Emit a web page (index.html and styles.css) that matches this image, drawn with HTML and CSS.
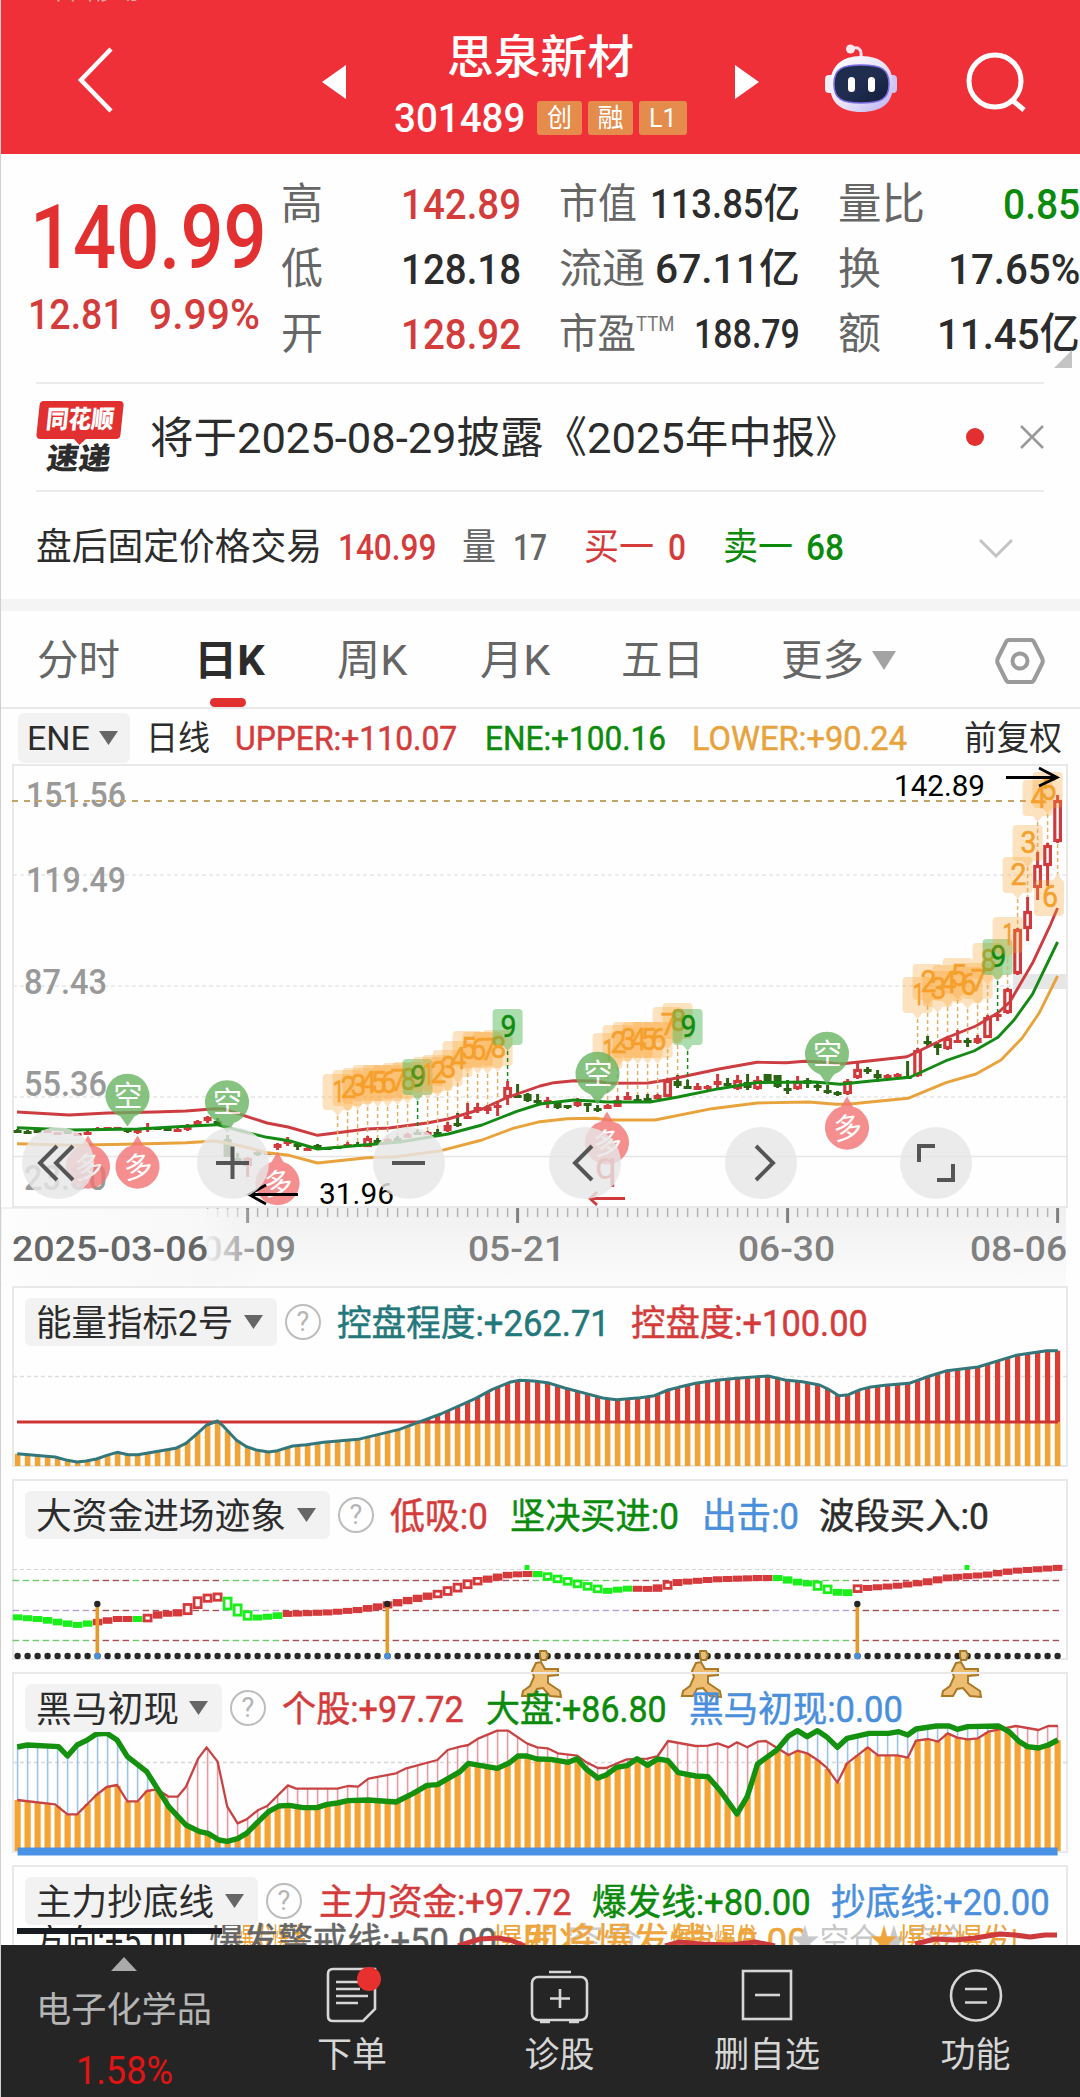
FILE: index.html
```html
<!DOCTYPE html>
<html lang="zh-CN">
<head>
<meta charset="utf-8">
<title>思泉新材 301489</title>
<link rel="stylesheet" href="styles.css">
</head>
<body>
<main class="app">
  <header class="topbar">
    <div class="carrier"><span data-w="92">中国移动</span></div>
    <div class="topbar-main">
      <svg class="back" viewBox="0 0 40 70"><path d="M36 4 6 35 36 66" /></svg>
      <svg class="step" viewBox="0 0 24 36"><path d="M24 1V35L0 18Z" /></svg>
      <div class="stock">
        <h1><span data-w="187">思泉新材</span></h1>
        <div class="code"><span class="num" data-w="131">301489</span><i><b data-w="25">创</b></i><i><b data-w="26">融</b></i><i class="wide"><b data-w="28">L1</b></i></div>
      </div>
      <svg class="step" viewBox="0 0 24 36"><path d="M0 1V35L24 18Z" /></svg>
      <svg class="robot" viewBox="0 0 75 76">
        <defs>
          <linearGradient id="shell" x1="0" y1="0" x2="1" y2="1"><stop offset="0" stop-color="#fff"/><stop offset=".55" stop-color="#e9e2f8"/><stop offset="1" stop-color="#b9adf0"/></linearGradient>
          <linearGradient id="visor" x1="0" y1="0" x2="1" y2="1"><stop offset="0" stop-color="#1c2c4c"/><stop offset=".5" stop-color="#202d4f"/><stop offset="1" stop-color="#141d3c"/></linearGradient>
        </defs>
        <path d="M27 10C34 7 38 10 37 18" fill="none" stroke="#f3dfe8" stroke-width="3"/>
        <circle cx="26.500" cy="10" r="4.500" fill="#ffe9ef"/>
        <rect x="1" y="36" width="10" height="18" rx="4" fill="#f4eef9"/>
        <rect x="63" y="36" width="10" height="18" rx="4" fill="#cdc5f2"/>
        <path d="M37 17C58 17 69 28 69 46C69 64 58 73 37 73C17 73 6 64 6 46C6 28 17 17 37 17Z" fill="url(#shell)"/>
        <path d="M37 26C57 26 65 30 65 45C65 60 57 64 37 64C18 64 10 60 10 45C10 30 18 26 37 26Z" fill="url(#visor)" stroke="#7b6be0" stroke-width="1.500"/>
        <rect x="24" y="38" width="7" height="15" rx="3.500" fill="#fff"/><rect x="44" y="38" width="7" height="15" rx="3.500" fill="#fff"/>
      </svg>
      <svg class="search" viewBox="0 0 64 64"><circle cx="30" cy="32" r="26"/><path d="M47 51 59 61"/></svg>
    </div>
  </header>

  <section class="quote">
    <div class="last">
      <strong><span class="num" data-w="237">140.99</span></strong>
      <div class="change num"><span data-w="96">12.81</span><span data-w="111">9.99%</span></div>
    </div>
    <dl class="c1">
      <dt><span data-w="42">高</span></dt><dd class="up num"><span data-w="120">142.89</span></dd>
      <dt><span data-w="42">低</span></dt><dd class="num"><span data-w="120">128.18</span></dd>
      <dt><span data-w="42">开</span></dt><dd class="up num"><span data-w="120">128.92</span></dd>
    </dl>
    <dl class="c2">
      <dt><span data-w="78">市值</span></dt><dd class="num"><span data-w="150">113.85亿</span></dd>
      <dt><span data-w="86">流通</span></dt><dd class="num"><span data-w="145">67.11亿</span></dd>
      <dt><span data-w="77">市盈</span><sup data-w="38">TTM</sup></dt><dd class="num"><span data-w="106">188.79</span></dd>
    </dl>
    <dl class="c3">
      <dt><span data-w="87">量比</span></dt><dd class="down num"><span data-w="77">0.85</span></dd>
      <dt><span data-w="43">换</span></dt><dd class="num"><span data-w="132">17.65%</span></dd>
      <dt><span data-w="43">额</span></dt><dd class="num"><span data-w="143">11.45亿</span></dd>
    </dl>
    <svg class="corner" viewBox="0 0 18 18"><path d="M18 0V18H0Z" /></svg>
  </section>

  <section class="news">
    <div class="badge-logo">
      <div class="flag"><span data-w="68">同花顺</span></div>
      <div class="express"><span data-w="64">速递</span></div>
    </div>
    <p><span data-w="709">将于2025-08-29披露《2025年中报》</span></p>
    <span class="dot"></span>
    <svg class="close" viewBox="0 0 24 24"><path d="M1 1 23 23M23 1 1 23" /></svg>
  </section>

  <section class="after">
    <span data-w="286">盘后固定价格交易</span>
    <span class="num up" data-w="98">140.99</span>
    <span class="muted" data-w="34">量</span>
    <span class="muted num" data-w="34">17</span>
    <span class="up" data-w="70">买一</span>
    <span class="up num" data-w="18">0</span>
    <span class="down" data-w="70">卖一</span>
    <span class="down num" data-w="38">68</span>
    <svg class="expand" viewBox="0 0 36 20"><path d="M2 2 18 18 34 2" /></svg>
  </section>

  <nav class="tabs">
    <span data-w="83">分时</span>
    <span class="active" data-w="71">日K</span>
    <span data-w="70">周K</span>
    <span data-w="70">月K</span>
    <span data-w="83">五日</span>
    <span data-w="83">更多</span>
    <svg class="tri" viewBox="0 0 24 19"><path d="M0 0H24L12 19Z" /></svg>
    <svg class="gear" viewBox="0 0 50 46"><path d="M14 2H36Q38 2 39 4L47 20Q48.500 23 47 26L39 42Q38 44 36 44H14Q12 44 11 42L3 26Q1.500 23 3 20L11 4Q12 2 14 2Z"/><circle cx="25" cy="23" r="7.500"/></svg>
  </nav>
  <div class="tab-line"><i></i></div>

  <section class="legend-main">
    <div class="picker"><span data-w="63">ENE</span><svg viewBox="0 0 19 14"><path d="M0 0H19L9.500 14Z"/></svg></div>
    <span data-w="64">日线</span>
    <span class="up num" data-w="222">UPPER:+110.07</span>
    <span class="down num" data-w="181">ENE:+100.16</span>
    <span class="gold num" data-w="215">LOWER:+90.24</span>
    <span class="adj" data-w="98">前复权</span>
  </section>

  <section class="panel price">
    <svg id="price" viewBox="0 764 1080 522"></svg>
    <div class="controls">
      <button><svg viewBox="0 0 72 72"><path d="M35 19 18 36 35 53M51 19 34 36 51 53"/></svg></button>
      <button><svg viewBox="0 0 72 72"><path d="M19 36H52M35.500 19.500V52"/></svg></button>
      <button><svg viewBox="0 0 72 72"><path d="M19 36H52"/></svg></button>
      <button><svg viewBox="0 0 72 72"><path d="M43 19 26 36 43 53"/></svg></button>
      <button><svg viewBox="0 0 72 72"><path d="M31 19 48 36 31 53"/></svg></button>
      <button><svg viewBox="0 0 72 72"><path d="M19 35V19H35M53 37V53H37"/></svg></button>
    </div>
  </section>

  <section class="panel indicator">
    <svg id="energy" viewBox="0 1286 1080 193"></svg>
    <div class="legend l-energy">
      <div class="picker"><span data-w="197">能量指标2号</span><svg viewBox="0 0 19 14"><path d="M0 0H19L9.500 14Z"/></svg></div>
      <span class="help"><b>?</b></span>
      <span class="teal" data-w="273">控盘程度:+262.71</span>
      <span class="up" data-w="237">控盘度:+100.00</span>
    </div>
  </section>

  <section class="panel indicator">
    <svg id="funds" viewBox="0 1479 1080 193"></svg>
    <div class="legend l-funds">
      <div class="picker"><span data-w="250">大资金进场迹象</span><svg viewBox="0 0 19 14"><path d="M0 0H19L9.500 14Z"/></svg></div>
      <span class="help"><b>?</b></span>
      <span class="up" data-w="98">低吸:0</span>
      <span class="down" data-w="169">坚决买进:0</span>
      <span class="blue" data-w="97">出击:0</span>
      <span data-w="170">波段买入:0</span>
    </div>
  </section>

  <section class="panel indicator">
    <svg id="horse" viewBox="0 1672 1080 193"></svg>
    <div class="legend l-horse">
      <div class="picker"><span data-w="143">黑马初现</span><svg viewBox="0 0 19 14"><path d="M0 0H19L9.500 14Z"/></svg></div>
      <span class="help"><b>?</b></span>
      <span class="up" data-w="182">个股:+97.72</span>
      <span class="down" data-w="181">大盘:+86.80</span>
      <span class="blue" data-w="214">黑马初现:0.00</span>
    </div>
  </section>

  <section class="panel indicator cut">
    <svg id="bottom" viewBox="0 1865 1080 80"></svg>
    <div class="legend l-bottom">
      <div class="picker"><span data-w="178">主力抄底线</span><svg viewBox="0 0 19 14"><path d="M0 0H19L9.500 14Z"/></svg></div>
      <span class="help"><b>?</b></span>
      <span class="up" data-w="253">主力资金:+97.72</span>
      <span class="down" data-w="219">爆发线:+80.00</span>
      <span class="blue" data-w="219">抄底线:+20.00</span>
    </div>
  </section>

  <footer class="actions">
    <div class="sector">
      <svg viewBox="0 0 26 14"><path d="M13 0 26 14H0Z"/></svg>
      <span data-w="176">电子化学品</span>
      <em class="num" data-w="97">1.58%</em>
    </div>
    <div class="action">
      <svg viewBox="0 0 60 60"><path d="M11 4H53V44L41 56H11Q6 56 6 51V9Q6 4 11 4Z"/><path d="M14 17H38M14 24H38M14 31H46M14 38H36"/><circle cx="47" cy="14" r="12"/></svg>
      <span data-w="70">下单</span>
    </div>
    <div class="action">
      <svg viewBox="0 0 60 60"><rect x="2" y="12" width="55" height="43" rx="6"/><path d="M19 7H41M30 24V43M20 33.500H40M10 57H20M39 57H49"/></svg>
      <span data-w="70">诊股</span>
    </div>
    <div class="action">
      <svg viewBox="0 0 60 60"><rect x="6" y="6" width="48" height="48"/><path d="M18 30H43"/></svg>
      <span data-w="106">删自选</span>
    </div>
    <div class="action">
      <svg viewBox="0 0 60 60"><circle cx="30" cy="30.500" r="25"/><path d="M19 24H41M19 37.500H41"/></svg>
      <span data-w="70">功能</span>
    </div>
  </footer>
</main>
<script src="charts.js"></script>
</body>
</html>
```

FILE: styles.css
```css
* { box-sizing: border-box; }
body {
  margin: 0;
  background: #fefefe;
  color: #2c2c2c;
  font-family: Roboto, "Noto Sans CJK SC", sans-serif;
}
.app { width: 1080px; height: 2097px; overflow: hidden; border-left: 1px solid #cfcfcf; }
.app > * { margin-left: -1px; }
.app svg { display: block; }
[data-w] { display: inline-block; justify-self: start; white-space: nowrap; transform-origin: 0 50%; }
.num { font-weight: 500; }
.up { color: #d43c3c; }
.down { color: #0c8a0c; }
.gold { color: #e8a33c; }
.teal { color: #24787c; }
.blue { color: #4a8fdc; }
.muted { color: #666; }

/* top bar */
.topbar { height: 154px; background: #f03038; color: #fff; overflow: hidden; }
.carrier { height: 4px; overflow: hidden; padding-left: 47px; font-size: 23px; color: #f6a6a8; display: flex; align-items: flex-end; }
.carrier span { line-height: 24px; height: 24px; }
.topbar-main { display: grid; grid-template-columns: 247px 24px 389px 24px 65px 141px 64px; height: 150px; align-items: start; padding-left: 75px; }
.back { margin-top: 41px; width: 40px; height: 70px; fill: none; stroke: #fff; stroke-width: 4.5; }
.step { width: 24px; height: 36px; fill: #fff; margin-top: 60px; }
.stock { display: flex; flex-direction: column; align-items: center; padding-top: 25px; }
.stock h1 { margin: 0; font-size: 46px; font-weight: 500; line-height: 56px; height: 56px; }
.code { display: flex; align-items: center; margin-top: 15px; height: 36px; font-size: 40px; line-height: 36px; }
.code > span { position: relative; top: 1px; }
.code i { display: flex; justify-content: center; align-items: center; width: 45px; height: 34px; border-radius: 3px; background: #e58c4c; font-style: normal; margin-left: 6px; }
.code i:nth-child(2) { margin-left: 12px; }
.code i.wide { width: 48px; }
.code b { font-size: 26px; font-weight: 400; }
.robot { grid-column: 6; width: 75px; height: 76px; margin-top: 35px; }
.search { grid-column: 7; width: 64px; height: 64px; margin-top: 45px; fill: none; stroke: #fff; stroke-width: 5; }

/* quote */
.quote { display: grid; grid-template-columns: 281px 240px 38px 241px 38px 242px; height: 228px; position: relative; }
.last { padding: 34px 0 0 28px; color: #e23030; }
.last strong { display: block; margin-left: 2px; font-size: 89px; line-height: 100px; height: 100px; }
.change { display: flex; gap: 25px; font-size: 43px; line-height: 46px; margin-top: 3px; color: #d43c3c; }
.quote dl { margin: 18px 0 0; display: grid; grid-template-columns: auto minmax(0, 1fr); grid-auto-rows: 65px; }
.c1 { grid-column: 2; }
.c2 { grid-column: 4; }
.c3 { grid-column: 6; }
.quote dt { color: #666; font-size: 43px; line-height: 65px; white-space: nowrap; }
.quote dd { margin: 0; justify-self: end; font-size: 43px; line-height: 65px; white-space: nowrap; }
.c2 dt, .c2 dd { font-size: 41px; }
.quote sup { font-size: 20px; line-height: 20px; vertical-align: 17px; color: #777; }
.corner { position: absolute; right: 8px; bottom: 14px; width: 18px; height: 18px; fill: #c4c4c4; }

/* notice */
.app > .news { display: grid; grid-template-columns: 89px 27px 687px 127px 54px 24px; align-items: center; width: 1008px; height: 110px; margin-left: 35px; border-top: 2px solid #ebebeb; border-bottom: 2px solid #ebebeb; }
.badge-logo { height: 73px; }
.flag { width: 84px; height: 38px; margin-left: 2px; background: #e23030; border-radius: 4px; transform: skewX(-6deg); color: #fff; font-size: 25px; font-weight: 900; line-height: 38px; text-align: center; }
.flag::after { content: ""; display: block; width: 0; margin: 0 0 0 38px; border: 6px solid transparent; border-top-color: #e23030; border-bottom: 0; }
.express { font-size: 30px; font-weight: 900; line-height: 30px; margin: 5px 0 0 11px; transform: skewX(-8deg); }
.news p { margin: 0; grid-column: 3; font-size: 43px; line-height: 60px; }
.news p span { position: relative; left: -2px; top: 1px; }
.dot { grid-column: 5; width: 18px; height: 18px; border-radius: 50%; background: #e23030; }
.close { width: 24px; height: 24px; fill: none; stroke: #999; stroke-width: 2.5; }

.after { display: grid; grid-template-columns: 302px 124px 51px 71px 84px 55px 83px 172px 36px; align-items: center; height: 107px; padding: 5px 0 0 36px; font-size: 37px; line-height: 50px; }
.expand { width: 36px; height: 20px; fill: none; stroke: #c4c4c4; stroke-width: 3; }

/* tabs */
.tabs { display: grid; grid-template-columns: 157px 143px 143px 141px 160px 91px 123px 50px; align-items: center; height: 108px; padding: 10px 0 7px 37px; border-top: 12px solid #f4f4f4; color: #666; font-size: 42px; line-height: 60px; }
.tabs .active { color: #2c2c2c; font-weight: 700; }
.tri { width: 24px; height: 19px; fill: #a3a3a3; }
.gear { width: 50px; height: 46px; fill: none; stroke: #9b9b9b; stroke-width: 4; }
.tab-line { height: 2px; background: #e9e9e9; display: flex; align-items: flex-end; padding-left: 210px; }
.tab-line i { width: 36px; height: 9px; border-radius: 5px; background: #e23030; margin-bottom: 2px; }

.picker { display: flex; align-items: center; justify-content: space-between; background: #f2f2f2; border-radius: 6px; height: 50px; }
.picker > svg { width: 19px; height: 14px; fill: #666; }
.legend-main { display: grid; grid-template-columns: 128px 89px 250px 207px 272px 97px; align-items: center; height: 55px; padding: 3px 0 0 18px; font-size: 34px; line-height: 48px; }
.legend-main .num { font-weight: 400; -webkit-text-stroke: .5px currentColor; }
.legend-main .picker { width: 112px; padding: 0 12px 0 9px; }

/* chart panels: drawing and legend share one cell */
.panel { display: grid; }
.panel > * { grid-area: 1 / 1; }
.panel > svg { width: 1080px; overflow: visible; }
.price > svg { height: 522px; }
.indicator { height: 193px; }
.indicator > svg { height: 193px; }
.controls { display: flex; gap: 103.8px; padding: 363px 0 0 21.5px; height: 440px; z-index: 1; }
.controls button { width: 72px; height: 72px; padding: 0; border: 0; border-radius: 50%; background: rgba(231, 231, 231, .82); }
.controls button svg { width: 72px; height: 72px; fill: none; stroke: #555; stroke-width: 4; }
.legend { display: grid; align-items: center; align-content: start; grid-auto-rows: 48px; padding: 12px 0 0 25px; font-size: 36px; line-height: 48px; z-index: 1; }
.legend > span:not(.help) { -webkit-text-stroke: .5px currentColor; }
.legend [data-w] { position: relative; top: 1.5px; }
.legend .picker { height: 48px; padding: 0 14px 0 11px; }
.help { width: 36px; height: 36px; border: 2.5px solid #bdbdbd; border-radius: 50%; display: flex; justify-content: center; align-items: center; color: #b5b5b5; font-size: 27px; line-height: 30px; }
.help b { font-weight: 400; }
.l-energy { grid-template-columns: 252px 8px 52px 294px 236px; }
.l-funds { grid-template-columns: 305px 8px 52px 120px 192px 117px 169px; }
.l-horse { grid-template-columns: 197px 8px 52px 204px 203px 213px; }
.l-bottom { grid-template-columns: 233px 8px 53px 273px 239px 217px; }
.legend .help { grid-column: 3; }
.cut { height: 80px; overflow: hidden; }
.cut > svg { height: 80px; overflow: hidden; }

/* bottom bar */
.actions { position: relative; z-index: 2; display: grid; grid-template-columns: 248px 208px 207px 208px 209px; height: 152px; background: #252525; color: #d6d6d6; font-size: 35px; line-height: 44px; }
.sector { display: flex; flex-direction: column; align-items: center; color: #b5b5b5; padding-top: 12px; }
.sector svg { width: 26px; height: 14px; fill: #aaa; }
.sector span { margin-top: 18px; }
.sector em { color: #e01414; font-style: normal; font-size: 38px; font-weight: 400; margin-top: 16px; }
.action { display: flex; flex-direction: column; align-items: center; padding-top: 20px; }
.action svg { width: 60px; height: 60px; fill: none; stroke: #d6d6d6; stroke-width: 2.6; }
.action svg circle[r="12"] { fill: #e8302f; stroke: none; }
.action span { margin-top: 9px; }
```

FILE: charts.js
```js
// Squeeze each label to its column width.
document.querySelectorAll('[data-w]').forEach(el => {
  const w = +el.dataset.w, natural = el.offsetWidth;
  el.style.transform = `scaleX(${w / natural})`;
  el.style.width = w + 'px';
});

const X = i => 17.6 + 10 * i;
const N = 105;
const rect = (x, y, w, h, a) => `<rect x="${x}" y="${y}" width="${w}" height="${h}" ${a}/>`;
const line = (x1, y1, x2, y2, a) => `<path d="M${x1} ${y1}L${x2} ${y2}" ${a}/>`;
const label = (s, x, y, w, size, a) => `<text x="${x}" y="${y}" font-size="${size}" textLength="${w}" lengthAdjust="spacingAndGlyphs" ${a}>${s}</text>`;
const poly = (pts, a) => `<polyline points="${pts.map(p => p.join()).join(' ')}" fill="none" stroke-linejoin="round" ${a}/>`;
const put = (id, s) => { document.getElementById(id).innerHTML = s; };
const pairs = s => s.trim().split(/\s+/).map(p => p.split(',').map(Number));
// Sub-panel series are kept in source units: x / 1.452, top + y / 3.
const series = (s, top) => pairs(s).map(([x, y]) => [x / 1.452, top + y / 3]);
const at = (pts, x) => {
  if (x <= pts[0][0]) return pts[0][1];
  for (let k = 1; k < pts.length; k++) if (x <= pts[k][0]) {
    const [a, b] = [pts[k - 1], pts[k]];
    return a[1] + (b[1] - a[1]) * (x - a[0]) / (b[0] - a[0]);
  }
  return pts[pts.length - 1][1];
};
const frame = (top, bottom) => rect(13, top, 1054, bottom - top, 'fill="none" stroke="#e9e9e9" stroke-width="2"');

// ---- Price chart
{
  const RED = '#d03a3c', GREEN = '#2c6414';
  let s = `<defs><linearGradient id="axis" x1="0" y1="0" x2="0" y2="1"><stop offset="0" stop-color="#f0f0f0"/><stop offset="1" stop-color="#fbfbfb"/></linearGradient>
  <linearGradient id="fade"><stop offset="0" stop-color="#fdfdfd"/><stop offset=".78" stop-color="#f8f8f8"/><stop offset="1" stop-color="#f6f6f6" stop-opacity="0"/></linearGradient></defs>`;
  s += rect(1, 1207, 1065, 79, 'fill="url(#axis)"');
  s += frame(765, 1207);
  s += rect(1013, 974, 54, 15, 'fill="#e6e6e6"');
  [875, 986, 1097].forEach(y => s += line(13, y, 1067, y, 'stroke="#e6e6e6" stroke-width="1.5" stroke-dasharray="4 3"'));
  s += line(13, 1156.5, 1067, 1156.5, 'stroke="#e6e6e6" stroke-width="1.5"');
  [['151.56', 26, 807, 100], ['119.49', 26, 892, 100], ['87.43', 24, 994, 83], ['55.36', 24, 1096, 83], ['23.30', 24, 1190, 83]]
    .forEach(([t, x, y, w]) => s += label(t, x, y, w, 35, 'fill="#999" font-weight="500"'));
  s += line(12, 801, 1040, 801, 'stroke="#c3a468" stroke-width="2" stroke-dasharray="6 6"');

  // type, high, open/close top, bottom, low; one entry per trading day
  const days = `g,1129,1130,1132,1132 g,1130,1131,1133,1133 g,1130,1130,1132,1132 r,1130,1130,1132,1132 r,1132,1132,1134,1134
  g,1130,1131,1134,1134 r,1133,1133,1135,1135 r,1130,1132,1134,1134 r,1127,1128,1130,1130 r,1127,1127,1129,1129
  r,1127,1127,1129,1129 g,1128,1129,1131,1133 r,1128,1130,1133,1134 r,1123,1127,1130,1132 g,1127,1127,1129,1129
  g,1127,1128,1130,1130 r,1127,1129,1131,1132 r,1124,1126,1130,1131 r,1120,1121,1125,1125 r,1116,1117,1121,1123
  g,1118,1121,1125,1125 g,1135,1139,1157,1157 g,1153,1158,1161,1163 r,1157,1158,1166,1177 g,1150,1152,1154,1156
  r,1152,1152,1154,1154 r,1143,1144,1148,1150 r,1137,1140,1144,1146 g,1142,1144,1147,1150 r,1147,1148,1150,1151
  g,1144,1145,1148,1148 g,1147,1147,1148,1148 g,1146,1146,1148,1148 r,1142,1144,1146,1146 g,1142,1144,1146,1147
  r,1136,1138,1147,1147 g,1138,1140,1142,1144 r,1138,1139,1140,1140 g,1136,1138,1140,1141 r,1133,1134,1138,1138
  g,1130,1132,1134,1135 r,1131,1132,1134,1135 g,1129,1132,1135,1136 r,1122,1125,1131,1132 g,1113,1123,1125,1127
  r,1103,1116,1118,1119 r,1103,1107,1111,1113 r,1105,1107,1111,1114 r,1101,1105,1108,1116 r,1081,1087,1098,1105
  g,1084,1095,1097,1098 g,1093,1094,1101,1102 g,1094,1100,1103,1105 r,1097,1100,1104,1108 g,1101,1103,1108,1109
  g,1105,1105,1107,1109 r,1098,1102,1106,1107 g,1103,1103,1105,1112 g,1105,1108,1109,1112 r,1104,1105,1109,1109
  r,1096,1100,1107,1107 r,1092,1096,1100,1100 g,1095,1099,1101,1101 g,1094,1098,1101,1103 r,1094,1095,1099,1099
  r,1078,1080,1097,1097 g,1075,1081,1086,1088 g,1080,1086,1089,1089 r,1083,1086,1090,1090 r,1085,1086,1089,1091
  r,1074,1081,1085,1088 g,1078,1083,1086,1087 r,1075,1080,1089,1090 g,1074,1082,1088,1090 r,1076,1080,1089,1090
  g,1074,1074,1081,1081 g,1075,1075,1087,1088 g,1080,1088,1089,1094 r,1076,1081,1089,1090 g,1078,1080,1084,1088
  g,1083,1085,1087,1091 g,1085,1090,1091,1094 g,1091,1092,1095,1096 r,1079,1081,1094,1095 r,1062,1069,1078,1079
  g,1067,1069,1071,1074 g,1070,1074,1078,1082 r,1074,1075,1078,1078 r,1073,1074,1076,1077 g,1061,1076,1077,1079
  r,1048,1050,1076,1077 g,1036,1041,1043,1046 g,1042,1044,1048,1055 r,1036,1038,1049,1050 r,1030,1040,1043,1043
  g,1038,1040,1041,1047 r,1035,1038,1043,1044 r,1015,1017,1038,1038 r,1012,1014,1016,1021 r,988,989,1013,1014
  r,928,929,974,975 r,897,911,929,941 r,852,865,888,900 r,843,845,866,886 r,795,800,842,843`
    .trim().split(/\s+/).map(d => d.split(','));
  days.forEach(([t, hi, a, b, lo], i) => {
    const c = t === 'r' ? RED : GREEN;
    s += rect(X(i) - 1.5, hi, 3, lo - hi, `fill="${c}"`);
    s += (t === 'r' && b - a > 7)
      ? rect(X(i) - 2.8, +a + 1.5, 5.6, b - a - 3, `fill="#fff" stroke="${c}" stroke-width="3.2"`)
      : rect(X(i) - 4, a, 8, Math.max(3, b - a), `fill="${c}"`);
  });

  const upper = pairs('17,1112 69,1115 108,1113 155,1112 186,1111 215,1108.700 224,1109 267,1123 288,1127 317.500,1135.300 367,1129 389,1128 427,1123 448,1119 482,1109 506,1098 540,1086 554,1082.700 574,1080.700 595,1081 609,1083.300 648,1083 667,1080 719,1069 757,1062.300 786,1062.700 805,1061.300 822,1062 840,1064 871,1060.700 907,1056.700 946,1038 976,1026 998,1012.700 1010,1001.700 1032.400,963.300 1049.600,926.700 1057.600,908');
  const mid = pairs('17,1127.700 72,1130 138,1129 186,1126.300 217,1124.700 241,1131 267,1137.300 289,1140.700 317.500,1149 367,1144.700 400,1142 448,1134 482,1125 516,1111.700 540,1104 574,1100 607,1102 650,1102 678,1097 719,1088.700 757,1082.500 815,1082 840,1084.300 871,1081 910,1077.300 946,1060.700 974,1051 998,1037.300 1014,1020 1032.400,994.300 1057.600,942');
  const lower = pairs('17,1143.700 72,1145.300 138,1144 186,1142.700 215,1141 241,1146 267,1152.700 289,1155.300 317.500,1163 367,1157.700 396,1156.700 441,1150.700 482,1140 513,1128.300 540,1121.700 567,1118.700 595,1118.300 609,1120 655,1120 712,1108.700 757,1103 809,1102 836,1104.300 850,1104 908,1098.300 946,1082.700 976,1074 1001,1060 1022,1038.300 1039,1013.300 1057.600,976');
  s += poly(lower, 'stroke="#e8a33c" stroke-width="2.9"') + poly(mid, 'stroke="#148a14" stroke-width="2.9"') + poly(upper, 'stroke="#cc3c40" stroke-width="2.9"');

  // numbered signals: first day, then tag tops
  [[32, 1074, 1070, 1068, 1065, 1065, 1065, 1063, 1062, 1059], [41, 1057, 1055, 1050, 1041, 1031, 1032, 1032, 1030, 1009],
   [59, 1033, 1025, 1022, 1022, 1022, 1022, 1007, 1003, 1009], [90, 977, 964, 971, 965, 958, 967, 963, 943, 939],
   [99, 917, 857, 825, 780, 772]].forEach(([start, ...tops]) => tops.forEach((y, k) => {
    const i = start + k, x = X(i), nine = k === 8;
    const stem = nine ? '#1a8a1a' : '#e0b266';
    s += line(x, y + 42, x, Math.max(y + 44, +days[i][1]), `stroke="${stem}" stroke-width="1.5" stroke-dasharray="4 3"`);
    s += `<path d="M${x - 11} ${y}h22q4 0 4 4v28q0 4 -4 4h-6l-5 6l-5 -6h-6q-4 0 -4 -4v-28q0 -4 4 -4Z" fill="${nine ? '#2fac39' : '#fba130'}" fill-opacity="${nine ? .4 : .3}"/>`;
    s += label(k + 1, k ? x - 7 : x - 5, y + 28, k ? 16 : 12, 31, `fill="${nine ? '#108c10' : '#f3a02c'}" stroke="${nine ? '#108c10' : '#f3a02c'}" stroke-width=".5"`);
  }));
  s += line(1057.6, 844, 1057.6, 874, 'stroke="#e0b266" stroke-width="1.5" stroke-dasharray="4 3"');
  s += '<path d="M1038 880h15l4.500 -6l4.500 6q2 0 2 4v28q0 4 -4 4h-22q-4 0 -4 -4v-28q0 -4 4 -4Z" fill="#fba130" fill-opacity=".3"/>';
  s += label('6', 1042, 907, 16, 31, 'fill="#f3a02c" stroke="#f3a02c" stroke-width=".5"');

  [[127.5, 1095.5], [227, 1102], [597.5, 1073.5], [827, 1053.5]].forEach(([x, y]) => {
    s += `<g opacity=".78"><path d="M${x} ${y + 31}l-7 -10A22 22 0 1 1 ${x + 7} ${y + 21}Z" fill="#65b35f"/>${label('空', x - 14, y + 11, 29, 29, 'fill="#fff"')}</g>`;
  });
  [[88, 1166.5], [137.5, 1166.5], [277.5, 1183], [607, 1142.5], [847, 1127.5]].forEach(([x, y]) => {
    s += `<g opacity=".8"><path d="M${x} ${y - 31}l-6 10A22 22 0 1 0 ${x + 6} ${y - 21}Z" fill="#f37474"/><text x="${x - 14}" y="${y + 11}" font-size="29" fill="#fff" transform="rotate(-8 ${x} ${y})">多</text></g>`;
  });
  s += label('142.89', 894, 796, 91, 29, 'fill="#000"') + '<path d="M1006 777.500H1057M1039 768L1057 777.500L1039 786" fill="none" stroke="#000" stroke-width="2.800"/>';
  s += label('31.96', 319, 1204, 75, 29, 'fill="#000"') + '<path d="M298 1194.500H248M266 1185L249 1194.500L266 1204" fill="none" stroke="#000" stroke-width="2.800"/>';
  s += label('q', 595, 1179, 22, 38, 'fill="#d03a3c"') + '<path d="M625 1198.500H590M597 1192L590 1198.500L597 1205" fill="none" stroke="#d03a3c" stroke-width="2.800"/>';

  for (let x = 207.6; x < 1060; x += 10) {
    const major = [247.6, 517.6, 787.6, 1057.6].some(m => Math.abs(m - x) < 1);
    s += rect(x - (major ? 1.5 : .75), 1208, major ? 3 : 1.5, major ? 15 : 9, `fill="${major ? '#808080' : '#b3b3b3'}"`);
  }
  s += label('04-09', 202, 1261, 94, 35, 'fill="#888" font-weight="500"');
  s += rect(2, 1209, 258, 76, 'fill="url(#fade)"');
  s += label('2025-03-06', 12, 1261, 196, 35, 'fill="#666" font-weight="500"');
  s += label('05-21', 468, 1261, 97, 35, 'fill="#808080" font-weight="500"');
  s += label('06-30', 738, 1261, 97, 35, 'fill="#808080" font-weight="500"');
  s += label('08-06', 970, 1261, 97, 35, 'fill="#808080" font-weight="500"');
  put('price', s);
}

// ---- Energy index
{
  const c = series('25,521 80,531 98,541 112,546 125,543 140,537 155,526 170,517 186,524 200,524 215,519 255,505 270,490 288,458 300,435 316,423 325,440 343,480 358,500 372,510 390,516 403,512 425,498 445,494 470,487 520,478 580,448 610,425 640,402 690,356 715,328 740,307 755,301 775,303 795,308 820,324 850,340 875,354 895,359 930,353 950,347 970,330 985,322 1010,310 1040,301 1070,295 1115,288 1140,300 1165,305 1190,315 1203,328 1218,347 1232,344 1250,328 1262,322 1285,316 1320,310 1350,288 1375,272 1420,261 1450,242 1475,226 1520,212 1536,212', 1280);
  let s = frame(1287, 1466) + line(13, 1376.5, 1067, 1376.5, 'stroke="#dedede" stroke-width="1.5" stroke-dasharray="4 3"');
  for (let i = 0; i < N; i++) {
    const y = at(c, X(i));
    s += rect(X(i) - 2.8, Math.max(1422, y), 5.6, 1466 - Math.max(1422, y), 'fill="#f0a438"');
    if (y < 1422) s += rect(X(i) - 2.6, y, 5.2, 1422 - y, 'fill="#dd3c30"');
  }
  s += line(17, 1422, 1058, 1422, 'stroke="#cf3434" stroke-width="3"') + poly(c, 'stroke="#33777b" stroke-width="3"');
  put('energy', s);
}

// ---- Fund flow signals
{
  const c = series('25,442 60,448 95,460 112,465 130,460 155,452 170,447 210,447 230,434 260,428 275,415 285,400 300,385 315,380 330,400 345,420 360,437 375,443 400,438 415,432 480,427 520,420 560,406 600,388 640,370 690,335 740,314 765,312 780,312 820,332 880,363 910,356 950,357 985,337 1040,328 1100,324 1130,324 1160,337 1180,342 1200,357 1218,368 1232,368 1245,356 1300,348 1340,338 1380,322 1430,315 1470,303 1540,293', 1470);
  const green = i => i <= 7 || i === 12 || (i >= 21 && i <= 26) || (i >= 52 && i <= 61) || (i >= 76 && i <= 83);
  let s = frame(1480, 1659) + line(13, 1569.5, 1067, 1569.5, 'stroke="#d4d4d4" stroke-width="1.2" stroke-dasharray="4 3"');
  [1580.5, 1610.5, 1640.5].forEach((y, k) => {
    for (let i = 0; i < N; i++) {
      const col = green(i) ? (k === 1 ? '#b7a0d0' : '#6ecb6c') : '#a75055';
      s += line(X(i) - 5, y, X(i) + 1.5, y, `stroke="${col}" stroke-width="1.4"`);
    }
  });
  for (let i = 0; i < N; i++) s += `<circle cx="${X(i)}" cy="1656" r="3.200" fill="#262626"/>`;
  for (let i = 0; i < N; i++) {
    const x = X(i), y = at(c, x), slope = Math.abs(at(c, x + 5) - at(c, x - 5));
    const h = Math.min(13, Math.max(6, 4.5 + slope * 1.3));
    const col = green(i) ? '#1bef1b' : '#d43a3c';
    s += h > 7.6 ? rect(x - 3.5, y - h / 2 + 1, 7, h - 2, `fill="#fff" stroke="${col}" stroke-width="2.800"`) : rect(x - 4.8, y - h / 2, 9.6, h, `fill="${col}"`);
  }
  s += rect(524.5, 1565, 5, 5, 'fill="#1bef1b"') + rect(964.5, 1565, 5, 5, 'fill="#1bef1b"');
  [97.3, 387.3, 857.3].forEach(x => s += rect(x - 1.8, 1605, 3.6, 48, 'fill="#e69a28"') + `<circle cx="${x}" cy="1604" r="3.200" fill="#262626"/><circle cx="${x}" cy="1656" r="3.200" fill="#4a8fdc"/>`);
  [520, 680, 940].forEach(x => {
    s += `<g transform="translate(${x} 1640)" fill="#edbd72" stroke="#a97925" stroke-width="2"><path d="M16 23L21 22L25 29L38 29V35L28 36L28 43L40 51L41 57L30 56L23 48L17 49L13 56L2 56L3 51L10 46L14 37L12 31Z"/><path d="M20 11H26L28 15L26 20H21L20 16Z" fill="#e2c080"/></g>`;
  });
  put('funds', s);
}

// ---- Stock vs market
{
  const g = series('25,261 40,255 85,260 98,288 112,255 125,242 140,222 155,220 170,240 185,290 213,335 245,440 270,495 290,515 302,520 318,540 330,544 345,536 358,520 375,485 390,455 405,438 420,436 440,443 460,443 475,433 490,429 505,422 535,420 575,426 600,400 620,376 635,374 668,335 680,310 722,325 740,308 752,288 765,288 780,297 800,298 825,307 838,296 850,325 868,354 880,345 895,322 910,317 925,296 940,316 955,297 970,302 985,338 1010,348 1028,350 1045,390 1070,462 1085,410 1100,312 1128,270 1145,228 1158,212 1172,230 1187,212 1200,230 1216,262 1230,235 1262,220 1290,220 1305,215 1318,225 1330,207 1360,198 1378,198 1390,208 1405,200 1450,198 1465,215 1480,245 1492,260 1508,264 1522,255 1536,240', 1660);
  const r = series('25,420 80,433 98,463 112,463 140,405 155,381 170,375 185,424 200,424 213,393 228,388 245,410 258,410 270,380 288,295 300,262 316,305 330,440 345,490 358,478 375,450 388,438 418,376 430,386 490,386 505,378 520,380 535,356 575,340 590,325 635,300 650,270 668,260 680,255 695,235 722,212 738,212 765,250 780,262 795,265 810,280 838,287 850,305 868,324 880,324 910,298 940,296 955,288 970,243 1010,258 1028,257 1042,250 1058,262 1070,247 1085,262 1100,245 1112,243 1145,285 1158,272 1172,280 1187,300 1200,322 1216,368 1230,310 1260,262 1275,286 1303,286 1318,293 1330,242 1348,237 1362,245 1376,220 1390,233 1405,238 1420,235 1435,215 1475,198 1508,210 1522,198 1536,198', 1660);
  let s = frame(1673, 1852) + line(13, 1762.5, 1067, 1762.5, 'stroke="#d8d8d8" stroke-width="1.500" stroke-dasharray="4 3"');
  for (let i = 0; i < N; i++) {
    const x = X(i), a = at(g, x), b = at(r, x), low = Math.max(a, b), top = Math.min(a, b);
    s += rect(x - 3.1, low, 6.2, 1851 - low, 'fill="#f5a332"');
    s += rect(x - .8, top, 1.6, low - top, `fill="${a < b ? '#9cc4ea' : '#e89aa0'}"`);
  }
  s += poly(r, 'stroke="#c84444" stroke-width="2.300"') + poly(g, 'stroke="#14910f" stroke-width="5.400"');
  s += rect(17.6, 1847.5, 1040, 8, 'fill="#4a92e6"');
  put('horse', s);
}

// ---- Bottom-fishing lines, mostly hidden under the action bar
{
  let s = frame(1866, 2000);
  s += label('方向:+5.00', 33, 1954, 153, 36, 'fill="#262626"');
  s += label('爆发爆发', 236, 1953, 72, 34, 'fill="#eda53c"');
  s += label('爆发警戒线:+50.00', 209, 1954, 288, 36, 'fill="#666" stroke="#666" stroke-width=".5"');
  s += label('爆发', 492, 1953, 62, 34, 'fill="#eda53c"');
  s += label('空仓', 566, 1954, 76, 36, 'fill="#ccc"');
  s += label('即将爆发线:+0.00', 522, 1954, 286, 36, 'fill="#eda53c" stroke="#eda53c" stroke-width=".5"');
  s += label('爆发爆发', 670, 1953, 88, 34, 'fill="#eda53c"');
  s += label('★空仓★空仓', 790, 1953, 178, 34, 'fill="#c8c8c8"');
  s += label('★爆发爆发!', 870, 1953, 148, 34, 'fill="#eda53c"');
  s += rect(17, 1928, 205, 6, 'fill="#171a1e"');
  s += poly(pairs('458,1946 480,1939 498,1938 510,1940 525,1946'), 'stroke="#cd3a3c" stroke-width="5"');
  s += poly(pairs('665,1946 680,1942 700,1944 730,1945 755,1942 775,1946'), 'stroke="#cd3a3c" stroke-width="5"');
  s += poly(pairs('915,1944 935,1939 955,1940 975,1938 1000,1934 1015,1935 1030,1937 1045,1935 1057,1935'), 'stroke="#cd3a3c" stroke-width="5"');
  put('bottom', s);
}
```
